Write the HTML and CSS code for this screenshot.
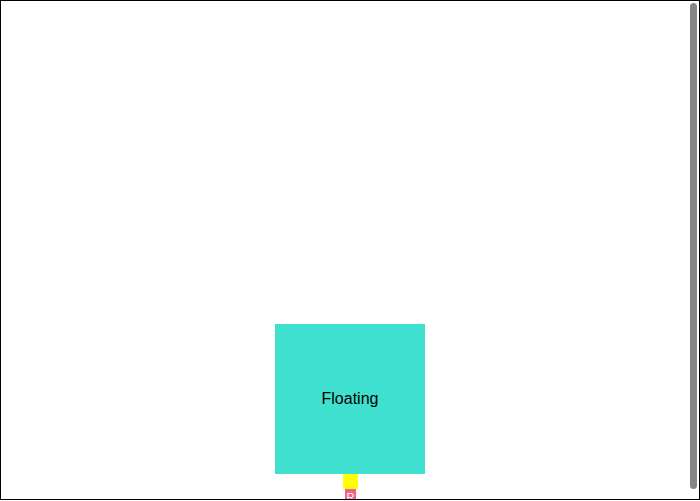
FILE: index.html
```html
<!DOCTYPE html>
<html>
<head>
<meta charset="utf-8">
<link rel="stylesheet" href="styles.css">
</head>
<body>
<div class="frame">
  <div class="stack">
    <div class="floating">Floating</div>
    <div class="anchor"></div>
    <span class="tag">R</span>
  </div>
  <div class="scroll-thumb"></div>
</div>
</body>
</html>
```
FILE: styles.css
```css
html, body {
  margin: 0;
  padding: 0;
  background: #fff;
}
.frame {
  position: relative;
  box-sizing: border-box;
  width: 700px;
  height: 500px;
  border: 1px solid #000;
  overflow: hidden;
  font-family: "Liberation Sans", Arial, sans-serif;
}
.scroll-thumb {
  position: absolute;
  top: 2px;
  right: 2px;
  width: 7px;
  height: 486px;
  border-radius: 4px;
  background: #858585;
}
.stack {
  display: flex;
  flex-direction: column;
  align-items: center;
  padding-top: 323px;
}
.floating {
  width: 150px;
  height: 150px;
  background: #40e0d0;
  display: flex;
  align-items: center;
  justify-content: center;
  font-size: 16px;
  color: #000;
}
.anchor {
  width: 15px;
  height: 15px;
  background: #ffff00;
}
.tag {
  display: block;
  height: 18px;
  padding: 0 2px;
  margin-left: 1px;
  background: #f0608a;
  color: #fff;
  font-size: 11px;
  line-height: 16px;
}
```
